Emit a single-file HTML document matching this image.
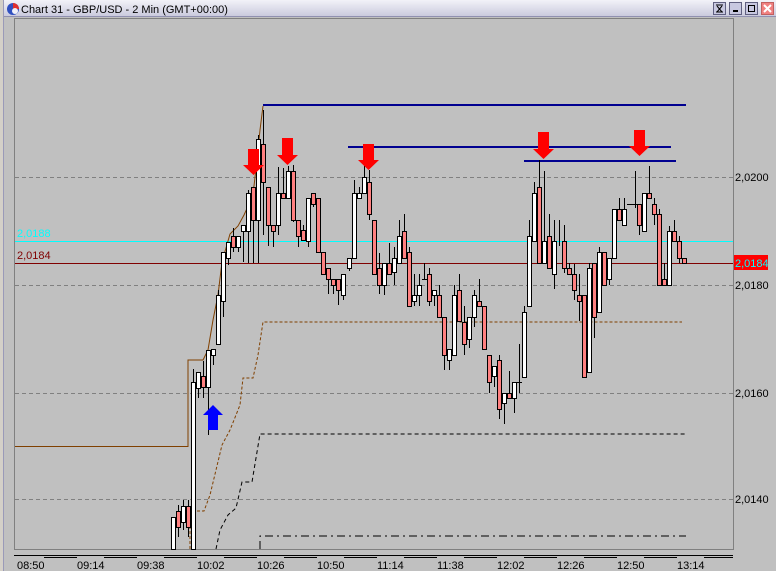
<!DOCTYPE html>
<html><head><meta charset="utf-8"><style>
html,body{margin:0;padding:0;width:776px;height:571px;overflow:hidden;background:#c0c0c0}
svg{display:block}
text{font-family:"Liberation Sans",sans-serif;font-size:11px}
</style></head><body>
<svg width="776" height="571" viewBox="0 0 776 571" xmlns="http://www.w3.org/2000/svg">
<defs><linearGradient id="tb" x1="0" y1="0" x2="0" y2="1"><stop offset="0" stop-color="#f2f2f8"/><stop offset="1" stop-color="#c8c8dc"/></linearGradient></defs>
<rect width="776" height="571" fill="#c0c0c0"/>
<rect x="0" y="0" width="3" height="571" fill="#d4d0c8"/>
<line x1="3.5" y1="0" x2="3.5" y2="571" stroke="#9a9ab8"/>
<rect x="4" y="0" width="772" height="17" fill="url(#tb)"/>
<line x1="4" y1="16.5" x2="776" y2="16.5" stroke="#9090b0"/>
<circle cx="13" cy="9" r="6" fill="#3050c0"/><path d="M13 3 A6 6 0 0 1 19 9 L13 9Z" fill="#e03030"/><circle cx="15" cy="11" r="3" fill="#f0f0f8"/>
<text x="21" y="13" fill="#000">Chart 31 - GBP/USD - 2 Min (GMT+00:00)</text>
<g stroke="#606080" fill="#c8c8e0"><rect x="713.5" y="2.5" width="12" height="12"/><rect x="729.5" y="2.5" width="12" height="12"/><rect x="745.5" y="2.5" width="12" height="12"/></g>
<rect x="761.5" y="2.5" width="12" height="12" fill="#f08080" stroke="#c06060"/>
<path d="M716 5h7M716 12h7M717 6l2.5 3-2.5 3M722 6l-2.5 3 2.5 3" stroke="#000" fill="none"/>
<path d="M733 11h5" stroke="#000" stroke-width="2"/>
<rect x="748.5" y="5.5" width="6" height="6" fill="none" stroke="#000"/>
<path d="M764 5l7 7M771 5l-7 7" stroke="#fff" stroke-width="2"/>
<rect x="14.5" y="18.5" width="719" height="531" fill="#c0c0c0" stroke="#808080"/>
<g stroke="#808080" stroke-dasharray="4,3">
<line x1="15" y1="177.5" x2="733" y2="177.5"/><line x1="15" y1="285.5" x2="733" y2="285.5"/>
<line x1="15" y1="393.5" x2="733" y2="393.5"/><line x1="15" y1="499.5" x2="733" y2="499.5"/>
</g>
<line x1="15" y1="241.5" x2="733" y2="241.5" stroke="#00ffff"/>
<line x1="15" y1="263.5" x2="733" y2="263.5" stroke="#800000"/>
<text x="17" y="237" fill="#00ffff">2,0188</text>
<text x="17" y="259" fill="#800000">2,0184</text>
<g stroke="#000090" stroke-width="2">
<line x1="263" y1="105" x2="686" y2="105"/><line x1="348" y1="147" x2="671" y2="147"/><line x1="524" y1="161" x2="676" y2="161"/>
</g>
<path d="M15 446.5H188V360H203L208 350L213 320L218 295L222 262L230 234L238 226L244 215L250 202L254 186L257 160L260 130L263 106" stroke="#804000" fill="none"/>
<path d="M190 549V511H204L210 495L216 470L222 445L230 430L240 405L243 378H253L258 355L263 322H682" stroke="#804000" fill="none" stroke-dasharray="3,2"/>
<path d="M216 549L220 530L228 515L236 508L242 482H252L256 458L260 434H686" stroke="#000" fill="none" stroke-dasharray="4,3"/>
<path d="M260 549V536H686" stroke="#000" fill="none" stroke-dasharray="8,4,2,4"/>
<path stroke="#000" fill="none" d="
M173.5 517V549M178.5 505V537M183.5 500V530M188.5 500V537M193.5 369V549M198.5 372V398M203.5 361V398M208.5 350V435M213.5 349V365M218.5 290V344M223.5 252V317M228.5 242V265M233.5 228V252M238.5 236V252M243.5 225V262M248.5 190V263M253.5 187V263M258.5 135V263M263.5 110V235M268.5 187V246M273.5 225V247M278.5 167V235M283.5 168V198M288.5 166V198M293.5 165V222M298.5 220V247M303.5 225V240M308.5 198V247M313.5 193V207M318.5 198V252M323.5 252V274M328.5 268V294M333.5 279V294M338.5 279V305M343.5 274V300M349.5 258V271M354.5 180V258M359.5 187V198M364.5 165V193M369.5 170V220M374.5 220V274M379.5 253V294M384.5 263V295M389.5 243V274M394.5 247V285M399.5 220V263M404.5 214V258M409.5 247V306M414.5 274V306M419.5 274V306M424.5 263V279M429.5 268V306M434.5 290V306M439.5 285V317M444.5 317V370M449.5 349V370M454.5 285V355M459.5 274V321M464.5 306V355M469.5 317V348M474.5 290V327M479.5 279V306M484.5 306V349M489.5 355V393M494.5 366V387M499.5 355V419M504.5 393V424M509.5 371V398M514.5 382V413M519.5 344V393M524.5 306V377M529.5 220V306M534.5 182V241M539.5 160V263M544.5 171V263M549.5 214V268M554.5 220V289M559.5 220V246M564.5 225V273M569.5 263V274M574.5 264V300M579.5 274V321M584.5 295V377M589.5 263V372M594.5 263V338M599.5 247V312M604.5 252V285M609.5 258V285M614.5 209V258M619.5 198V220M624.5 198V225M629.5 204V204M635.5 171V208M639.5 204V235M644.5 193V231M649.5 166V198M654.5 198V225M659.5 209V285M664.5 263V285M669.5 226V285M674.5 220V241M679.5 236V263M684.5 258V263
M517 382.5H522M422 279.5H427M627 204.5H638"/>
<g fill="#fff" stroke="#000">
<rect x="171.5" y="517.5" width="4" height="32"/><rect x="181.5" y="506.5" width="4" height="16"/><rect x="191.5" y="382.5" width="4" height="167"/><rect x="196.5" y="372.5" width="4" height="16"/><rect x="206.5" y="350.5" width="4" height="37"/><rect x="211.5" y="349.5" width="4" height="6"/><rect x="216.5" y="295.5" width="4" height="49"/><rect x="221.5" y="252.5" width="4" height="49"/><rect x="226.5" y="242.5" width="4" height="16"/><rect x="236.5" y="236.5" width="4" height="11"/><rect x="241.5" y="225.5" width="4" height="6"/><rect x="246.5" y="193.5" width="4" height="38"/><rect x="256.5" y="139.5" width="4" height="81"/><rect x="276.5" y="193.5" width="4" height="32"/><rect x="286.5" y="171.5" width="4" height="27"/><rect x="306.5" y="198.5" width="4" height="43"/><rect x="341.5" y="274.5" width="4" height="21"/><rect x="347.5" y="258.5" width="4" height="10"/><rect x="352.5" y="193.5" width="4" height="65"/><rect x="357.5" y="193.5" width="4" height="5"/><rect x="362.5" y="177.5" width="4" height="16"/><rect x="382.5" y="263.5" width="4" height="22"/><rect x="392.5" y="258.5" width="4" height="14"/><rect x="397.5" y="236.5" width="4" height="27"/><rect x="412.5" y="295.5" width="4" height="6"/><rect x="417.5" y="285.5" width="4" height="10"/><rect x="432.5" y="290.5" width="4" height="5"/><rect x="447.5" y="349.5" width="4" height="11"/><rect x="452.5" y="295.5" width="4" height="60"/><rect x="467.5" y="317.5" width="4" height="22"/><rect x="472.5" y="295.5" width="4" height="22"/><rect x="492.5" y="366.5" width="4" height="10"/><rect x="502.5" y="393.5" width="4" height="10"/><rect x="512.5" y="382.5" width="4" height="16"/><rect x="522.5" y="312.5" width="4" height="65"/><rect x="527.5" y="236.5" width="4" height="70"/><rect x="532.5" y="193.5" width="4" height="48"/><rect x="542.5" y="241.5" width="4" height="22"/><rect x="552.5" y="241.5" width="4" height="33"/><rect x="587.5" y="268.5" width="4" height="104"/><rect x="597.5" y="252.5" width="4" height="60"/><rect x="607.5" y="258.5" width="4" height="21"/><rect x="612.5" y="209.5" width="4" height="49"/><rect x="622.5" y="209.5" width="4" height="16"/><rect x="642.5" y="193.5" width="4" height="38"/><rect x="667.5" y="231.5" width="4" height="54"/>
</g>
<g fill="#ff8080" stroke="#000">
<rect x="176.5" y="511.5" width="4" height="16"/><rect x="186.5" y="506.5" width="4" height="21"/><rect x="201.5" y="376.5" width="4" height="11"/><rect x="231.5" y="236.5" width="4" height="11"/><rect x="251.5" y="187.5" width="4" height="33"/><rect x="261.5" y="144.5" width="4" height="38"/><rect x="266.5" y="187.5" width="4" height="38"/><rect x="271.5" y="225.5" width="4" height="6"/><rect x="281.5" y="193.5" width="4" height="5"/><rect x="291.5" y="171.5" width="4" height="49"/><rect x="296.5" y="220.5" width="4" height="16"/><rect x="301.5" y="230.5" width="4" height="10"/><rect x="311.5" y="193.5" width="4" height="11"/><rect x="316.5" y="198.5" width="4" height="54"/><rect x="321.5" y="252.5" width="4" height="22"/><rect x="326.5" y="268.5" width="4" height="11"/><rect x="331.5" y="279.5" width="4" height="6"/><rect x="336.5" y="279.5" width="4" height="11"/><rect x="367.5" y="182.5" width="4" height="32"/><rect x="372.5" y="220.5" width="4" height="54"/><rect x="377.5" y="268.5" width="4" height="17"/><rect x="387.5" y="263.5" width="4" height="11"/><rect x="402.5" y="231.5" width="4" height="27"/><rect x="407.5" y="252.5" width="4" height="54"/><rect x="427.5" y="274.5" width="4" height="27"/><rect x="437.5" y="295.5" width="4" height="22"/><rect x="442.5" y="317.5" width="4" height="38"/><rect x="457.5" y="290.5" width="4" height="31"/><rect x="462.5" y="322.5" width="4" height="22"/><rect x="477.5" y="301.5" width="4" height="5"/><rect x="482.5" y="306.5" width="4" height="43"/><rect x="487.5" y="355.5" width="4" height="27"/><rect x="497.5" y="360.5" width="4" height="49"/><rect x="507.5" y="393.5" width="4" height="5"/><rect x="537.5" y="187.5" width="4" height="76"/><rect x="547.5" y="236.5" width="4" height="32"/><rect x="562.5" y="241.5" width="4" height="27"/><rect x="567.5" y="268.5" width="4" height="6"/><rect x="572.5" y="274.5" width="4" height="16"/><rect x="577.5" y="295.5" width="4" height="6"/><rect x="582.5" y="295.5" width="4" height="82"/><rect x="592.5" y="263.5" width="4" height="54"/><rect x="602.5" y="252.5" width="4" height="33"/><rect x="617.5" y="209.5" width="4" height="11"/><rect x="637.5" y="204.5" width="4" height="21"/><rect x="647.5" y="193.5" width="4" height="5"/><rect x="652.5" y="204.5" width="4" height="10"/><rect x="657.5" y="214.5" width="4" height="71"/><rect x="662.5" y="279.5" width="4" height="6"/><rect x="672.5" y="231.5" width="4" height="10"/><rect x="677.5" y="241.5" width="4" height="17"/><rect x="682.5" y="258.5" width="4" height="5"/>
</g>
<g fill="#ff0000">
<path d="M248 149h11v16h5l-10.5 10l-10.5-10h5z"/>
<path d="M282 138h11v17h5l-10.5 10l-10.5-10h5z"/>
<path d="M363 144h11v16h5l-10.5 10l-10.5-10h5z"/>
<path d="M538 132h11v17h5l-10.5 10l-10.5-10h5z"/>
<path d="M634 130h11v16h5l-10.5 10l-10.5-10h5z"/>
</g>
<path d="M208 430h10v-15h5l-10-10l-10 10h5z" fill="#0000ff"/>
<g fill="#000">
<text x="735" y="181">2,0200</text><text x="735" y="289">2,0180</text><text x="735" y="397">2,0160</text><text x="735" y="503">2,0140</text>
</g>
<rect x="734" y="255" width="34" height="15" fill="#ff0000"/>
<text x="735" y="267" fill="#00ffff">2,0184</text>
<line x1="14" y1="555.5" x2="733" y2="555.5" stroke="#000"/>
<path stroke="#000" d="M44 557.5h33M104 557.5h33M164 557.5h33M224 557.5h33M284 557.5h33M344 557.5h33M404 557.5h33M464 557.5h33M524 557.5h33M584 557.5h33M644 557.5h33M704 557.5h29"/>
<g fill="#000">
<text x="17" y="569">08:50</text><text x="77" y="569">09:14</text><text x="137" y="569">09:38</text><text x="197" y="569">10:02</text><text x="257" y="569">10:26</text><text x="317" y="569">10:50</text><text x="377" y="569">11:14</text><text x="437" y="569">11:38</text><text x="497" y="569">12:02</text><text x="557" y="569">12:26</text><text x="617" y="569">12:50</text><text x="677" y="569">13:14</text>
</g>
</svg>
</body></html>
